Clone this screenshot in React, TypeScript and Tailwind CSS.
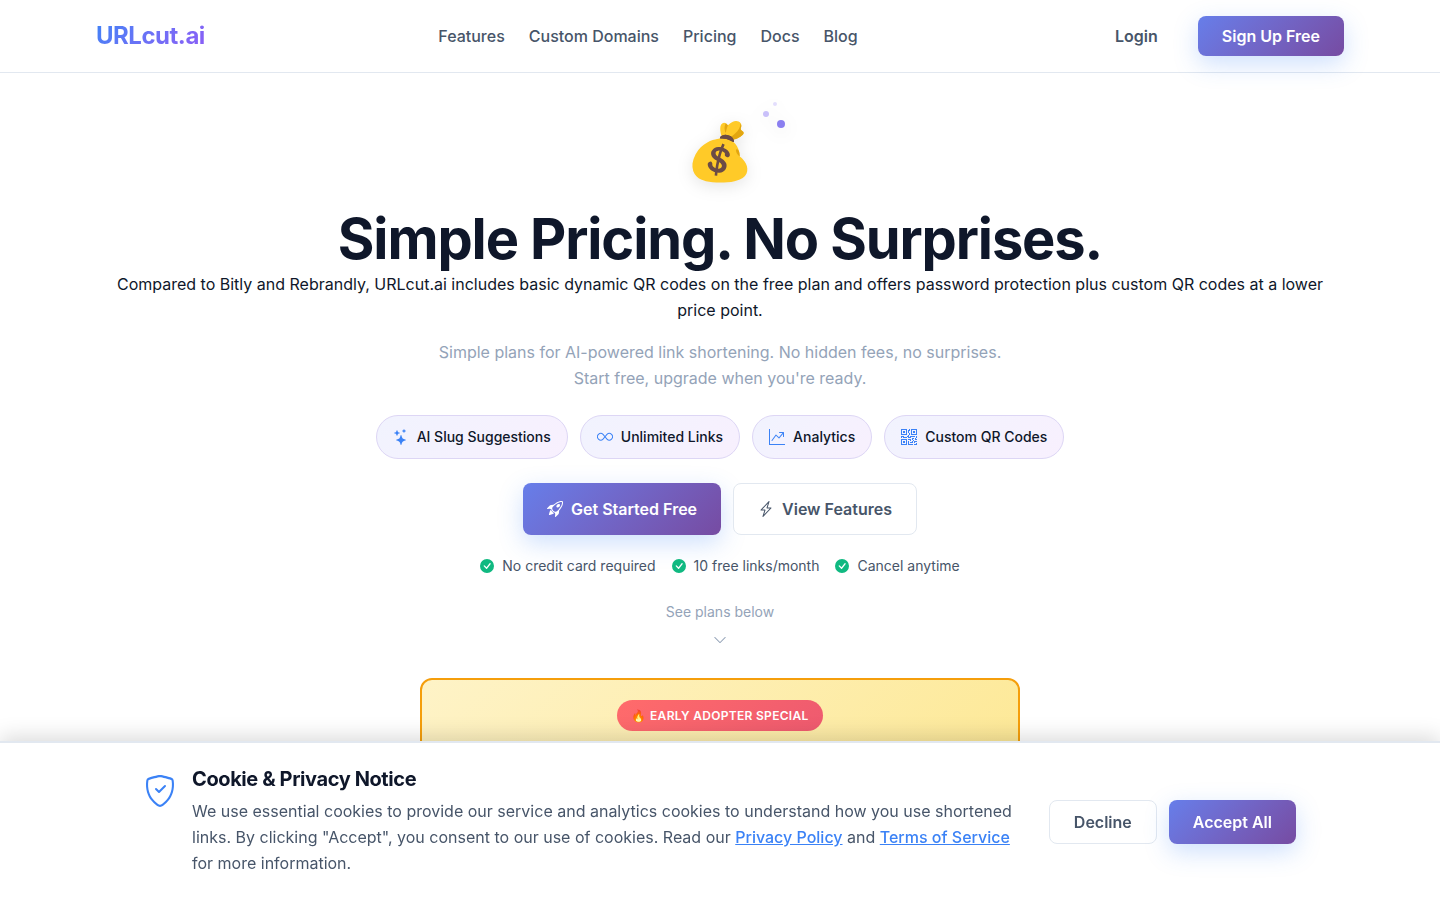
import { useState } from "react";
import {
  BsCheckCircleFill,
  BsChevronDown,
  BsGraphUpArrow,
  BsInfinity,
  BsLightningCharge,
  BsQrCode,
  BsRocketTakeoff,
  BsShieldCheck,
  BsStars,
} from "react-icons/bs";
import clsx from "clsx";

const navItems = [
  { title: "Features", href: "#features" },
  { title: "Custom Domains", href: "#domains" },
  { title: "Pricing", href: "#pricing" },
  { title: "Docs", href: "#docs" },
  { title: "Blog", href: "#blog" },
];

const highlights = [
  { title: "AI Slug Suggestions", icon: BsStars },
  { title: "Unlimited Links", icon: BsInfinity },
  { title: "Analytics", icon: BsGraphUpArrow },
  { title: "Custom QR Codes", icon: BsQrCode },
];

const guarantees = ["No credit card required", "10 free links/month", "Cancel anytime"];

const primaryButton =
  "flex items-center justify-center gap-2 rounded-lg bg-linear-135 from-[#667eea] to-[#764ba2] px-6 font-semibold text-white shadow-[0_8px_24px_rgba(59,130,246,0.25)]";
const outlineButton =
  "flex items-center justify-center gap-2 rounded-lg border border-[#e2e8f0] bg-white px-6 font-semibold text-[#475569]";

function Header() {
  return (
    <header className="border-b border-[#e2e8f0]">
      <div className="mx-auto flex h-18 max-w-7xl items-center justify-between px-4">
        <a
          href="#home"
          className="bg-linear-135 from-[#3b82f6] to-[#8b5cf6] bg-clip-text text-2xl font-bold tracking-[-0.02em] text-transparent"
        >
          URLcut.ai
        </a>

        <nav className="flex gap-6">
          {navItems.map((item) => (
            <a key={item.title} href={item.href} className="font-medium text-[#475569]">
              {item.title}
            </a>
          ))}
        </nav>

        <div className="flex items-center gap-4">
          <a href="#login" className="px-6 font-semibold text-[#475569]">
            Login
          </a>
          <a href="#signup" className={clsx(primaryButton, "h-10")}>
            Sign Up Free
          </a>
        </div>
      </div>
    </header>
  );
}

function Hero() {
  return (
    <section className="flex flex-col items-center text-center">
      {/* Money bag with floating particles */}
      <div className="relative mt-7 w-[130px] text-[56px] leading-[100px] drop-shadow-[0_4px_8px_rgba(0,0,0,0.1)]">
        <span role="img" aria-label="Money bag">💰</span>
        <span className="absolute top-[19px] right-0 size-2 rounded-full bg-[#8b7ff0]" />
        <span className="absolute top-2.5 right-4 size-1.5 rounded-full bg-[#c9c0fa]" />
        <span className="absolute top-px right-2 size-1 rounded-full bg-[#e3defd]" />
      </div>

      <h1 className="mt-1.5 text-[56px] leading-16 font-bold tracking-[-0.02em] text-[#0f172a]">
        Simple Pricing. No Surprises.
      </h1>
      <p className="leading-[26px] text-[#0f172a]">
        Compared to Bitly and Rebrandly, URLcut.ai includes basic dynamic QR codes on the free plan and
        offers password protection plus custom QR codes at a lower price point.
      </p>
      <p className="mt-4 leading-[26px] text-[#94a3b8]">
        Simple plans for AI-powered link shortening. No hidden fees, no surprises.
        <br />
        Start free, upgrade when you're ready.
      </p>

      <ul className="mt-6 flex flex-wrap justify-center gap-3">
        {highlights.map((item) => (
          <li
            key={item.title}
            className="flex h-11 items-center gap-2 rounded-full border border-[#ddd6f5] bg-linear-135 from-[#f1f3fe] to-[#f8f0fe] px-4 text-sm font-medium text-[#0f172a]"
          >
            <item.icon className="size-4 text-[#3b82f6]" />
            {item.title}
          </li>
        ))}
      </ul>

      <div className="mt-6 flex flex-wrap justify-center gap-3">
        <a href="#signup" className={clsx(primaryButton, "h-13")}>
          <BsRocketTakeoff className="size-4" />
          Get Started Free
        </a>
        <a href="#features" className={clsx(outlineButton, "h-13")}>
          <BsLightningCharge className="size-4" />
          View Features
        </a>
      </div>

      <ul className="mt-5 flex flex-wrap justify-center gap-4 text-sm leading-[22px] text-[#475569]">
        {guarantees.map((text) => (
          <li key={text} className="flex items-center gap-2">
            <BsCheckCircleFill className="size-3.5 text-[#10b981]" />
            {text}
          </li>
        ))}
      </ul>

      <a href="#plans" className="mt-6 flex flex-col items-center gap-2.5 text-sm leading-[22px] text-[#94a3b8]">
        See plans below
        <BsChevronDown className="size-3.5" />
      </a>
    </section>
  );
}

function EarlyAdopterCard() {
  return (
    <section
      id="plans"
      className="mx-auto mt-[31px] mb-40 flex min-h-60 max-w-[600px] justify-center rounded-xl border-2 border-[#f59e0b] bg-linear-135 from-[#fef3c7] to-[#fde68a] p-5"
    >
      <span className="self-start rounded-full bg-linear-135 from-[#ff6b6b] to-[#ee5a6f] px-3.5 py-1.5 text-xs leading-[19px] font-semibold tracking-wide text-white uppercase">
        🔥 Early Adopter Special
      </span>
    </section>
  );
}

function CookieBanner({ onClose }: { onClose: () => void }) {
  return (
    <aside
      aria-label="Cookie notice"
      className="fixed inset-x-0 bottom-0 border-t-2 border-[#e2e8f0] bg-white py-6 shadow-[0_-4px_20px_rgba(0,0,0,0.15)]"
    >
      <div className="mx-auto flex max-w-6xl items-center gap-8">
        <div className="flex flex-1 items-start gap-4">
          <BsShieldCheck className="mt-2 size-8 shrink-0 text-[#3b82f6]" />
          <div>
            <h2 className="mb-[7px] text-xl leading-6 font-bold tracking-[-0.02em] text-[#0f172a]">
              Cookie &amp; Privacy Notice
            </h2>
            <p className="leading-[26px] text-[#475569]">
              We use essential cookies to provide our service and analytics cookies to understand how you
              use shortened links. By clicking "Accept", you consent to our use of cookies. Read our{" "}
              <a href="#privacy" className="font-medium text-[#3b82f6] underline">
                Privacy Policy
              </a>{" "}
              and{" "}
              <a href="#terms" className="font-medium text-[#3b82f6] underline">
                Terms of Service
              </a>{" "}
              for more information.
            </p>
          </div>
        </div>
        <div className="flex shrink-0 gap-3">
          <button type="button" onClick={onClose} className={clsx(outlineButton, "h-11")}>
            Decline
          </button>
          <button type="button" onClick={onClose} className={clsx(primaryButton, "h-11")}>
            Accept All
          </button>
        </div>
      </div>
    </aside>
  );
}

export default function App() {
  const [showCookies, setShowCookies] = useState(true);

  return (
    <div className="min-h-screen bg-white font-['Inter',sans-serif] text-base">
      <Header />
      <main className="mx-auto max-w-7xl px-4">
        <Hero />
        <EarlyAdopterCard />
      </main>
      {showCookies && <CookieBanner onClose={() => setShowCookies(false)} />}
    </div>
  );
}
